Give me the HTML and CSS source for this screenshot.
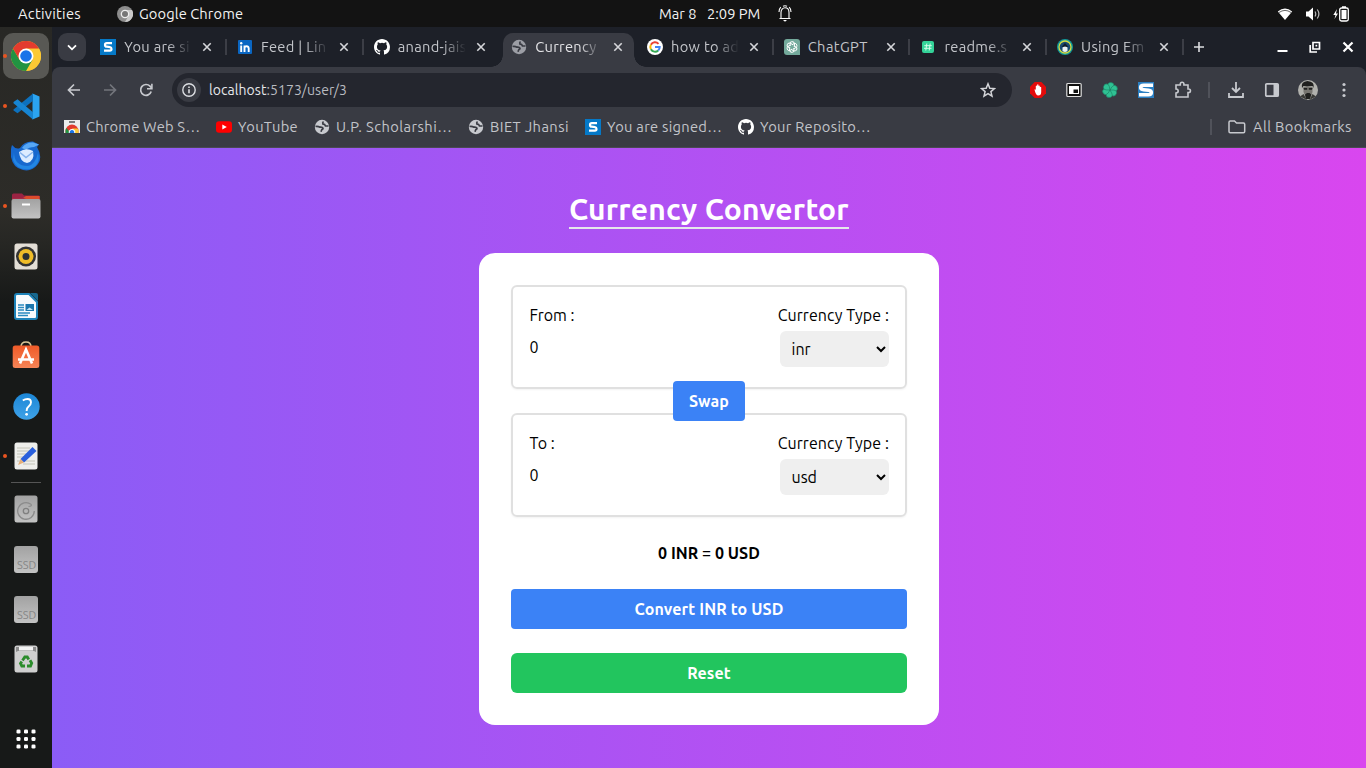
FILE: index.html
```html
<!DOCTYPE html>
<html lang="en">
<head>
<meta charset="utf-8">
<title>Currency Convertor</title>
<link rel="stylesheet" href="styles.css">
</head>
<body>
<svg class="defs" width="0" height="0">
  <defs>
    <linearGradient id="steel" x1="0" y1="0" x2="0" y2="1"><stop offset="0" stop-color="#a2a2a2"/><stop offset="1" stop-color="#c3c3c3"/></linearGradient>
    <linearGradient id="orange" x1="0" y1="0" x2="0" y2="1"><stop offset="0" stop-color="#ef5a28"/><stop offset="1" stop-color="#f68456"/></linearGradient>
    <linearGradient id="blue" x1="0" y1="0" x2="0" y2="1"><stop offset="0" stop-color="#1c86d6"/><stop offset="1" stop-color="#3fa2e8"/></linearGradient>
    <symbol id="chrome" viewBox="0 0 48 48">
      <circle cx="24" cy="24" r="24" fill="#fbc116"/>
      <path d="M24 12H44.8A24 24 0 0 1 24 48L34.4 30Z" fill="#fcc934"/>
      <path d="M13.6 30 3.2 12A24 24 0 0 0 24 48L34.4 30Z" fill="#229342"/>
      <path d="M3.2 12 13.6 30 24 12H44.8A24 24 0 0 0 3.2 12Z" fill="#e33b2e"/>
      <circle cx="24" cy="24" r="12" fill="#fff"/><circle cx="24" cy="24" r="9.300" fill="#1a73e8"/>
    </symbol>
    <symbol id="github" viewBox="0 0 16 16"><path fill="#fff" d="M8 0C3.58 0 0 3.58 0 8c0 3.54 2.29 6.53 5.47 7.59.4.07.55-.17.55-.38 0-.19-.01-.82-.01-1.49-2.01.37-2.53-.49-2.69-.94-.09-.23-.48-.94-.82-1.13-.28-.15-.68-.52-.01-.53.63-.01 1.08.58 1.23.82.72 1.21 1.87.87 2.33.66.07-.52.28-.87.51-1.07-1.78-.2-3.64-.89-3.64-3.95 0-.87.31-1.59.82-2.15-.08-.2-.36-1.02.08-2.12 0 0 .67-.21 2.2.82a7.6 7.6 0 0 1 4 0c1.53-1.04 2.2-.82 2.2-.82.44 1.1.16 1.92.08 2.12.51.56.82 1.27.82 2.15 0 3.07-1.87 3.75-3.65 3.95.29.25.54.73.54 1.48 0 1.07-.01 1.93-.01 2.2 0 .21.15.46.55.38A8 8 0 0 0 16 8c0-4.42-3.58-8-8-8z"/></symbol>
    <symbol id="globe" viewBox="0.8 0.8 22.4 22.4"><path fill="currentColor" d="M12 2C6.480 2 2 6.480 2 12s4.480 10 10 10 10-4.480 10-10S17.520 2 12 2zm-1 17.930c-3.950-.49-7-3.850-7-7.930 0-.62.08-1.210.21-1.790L9 15v1c0 1.100.9 2 2 2v1.930zm6.900-2.540c-.26-.81-1-1.390-1.900-1.390h-1v-3c0-.55-.45-1-1-1H8v-2h2c.55 0 1-.45 1-1V7h2c1.100 0 2-.9 2-2v-.41c2.930 1.190 5 4.060 5 7.410 0 2.080-.8 3.970-2.100 5.390z"/></symbol>
    <symbol id="globe-solid" viewBox="0 0 16 16"><circle cx="8" cy="8" r="7.200" fill="currentColor"/><path d="M14.500 7H11.500Q10.800 5 9 5.200 8.200 3.800 9.500 2.500M1.500 7.500Q4 7 6 8.200 9 7.800 9 9.800 7.500 10.500 7 12.800" fill="none" stroke="#393b43" stroke-width="1.700"/></symbol>
    <symbol id="sfav" viewBox="0 0 16 16"><path fill="#0579c8" d="M0 0h16v16H0z"/><path fill="none" stroke="#fff" stroke-width="2.200" d="M12 4.200H6.800Q5 4.200 5 5.900 5 7.600 6.800 7.700L10 8.200Q11.500 8.400 11.500 10 11.500 11.700 9.800 11.700H4"/></symbol>
    <symbol id="x" viewBox="0 0 10 10"><path d="m1.300 1.300 7.400 7.400m0-7.400L1.300 8.700" stroke="currentColor" stroke-width="1.600"/></symbol>
    <symbol id="petals" viewBox="0 0 24 24">
      <g fill="none" stroke="currentColor" stroke-width="1.800"><path id="ptl" d="M12 8 16 5.500Q20 4.500 21 8.500 21.500 11 19.500 13L14.500 15.500"/><use href="#ptl" transform="rotate(60 12 12)"/><use href="#ptl" transform="rotate(120 12 12)"/><use href="#ptl" transform="rotate(180 12 12)"/><use href="#ptl" transform="rotate(240 12 12)"/><use href="#ptl" transform="rotate(300 12 12)"/></g>
    </symbol>
    <symbol id="swirl" viewBox="0 0 24 24">
      <g fill="#2fc193" stroke="#1b7a61" stroke-width=".8"><path id="swl" d="M12 12 9.500 7.500Q7 2 12 .8 17.500 0 18 5 17.500 8 12 12z"/><use href="#swl" transform="rotate(60 12 12)"/><use href="#swl" transform="rotate(120 12 12)"/><use href="#swl" transform="rotate(180 12 12)"/><use href="#swl" transform="rotate(240 12 12)"/><use href="#swl" transform="rotate(300 12 12)"/></g>
    </symbol>
  </defs>
</svg>

<header class="topbar">
  <div class="topbar-left">
    <span class="activities">Activities</span>
    <svg class="app-icon" width="16" height="16" viewBox="0 0 48 48"><circle cx="24" cy="24" r="24" fill="#8d8d8d"/><path d="M24 12H45A24 24 0 0 1 24 48L34 30z" fill="#c9c9c9"/><circle cx="24" cy="24" r="13" fill="#eee"/><circle cx="24" cy="24" r="9" fill="#777"/></svg>
    <span class="appname">Google Chrome</span>
  </div>
  <div class="clock"><span class="date">Mar 8</span><span class="time">2:09 PM</span>
    <svg width="14" height="17" viewBox="0 0 14 17" fill="none" stroke="#fff" stroke-width="1.100"><path d="M1.500 13.500h11M3 13V7.500C3 4.800 4.600 2.800 7 2.800S11 4.800 11 7.500V13M5 1.200Q7 .2 9 1.200M2.800 2.200Q1 4 1 7M11.200 2.200Q13 4 13 7"/><path d="M5 15h4l-2 1.700z" fill="#fff" stroke="none"/></svg>
  </div>
  <div class="status">
    <svg width="16" height="14" viewBox="0 0 16 14"><path d="M8 13 .8 4.500Q8-1.500 15.200 4.500z" fill="#fff"/><path d="M2 5.500Q8 1.300 14 5.500" stroke="#555" fill="none" stroke-width=".9"/></svg>
    <svg width="16" height="14" viewBox="0 0 16 14"><path d="M1 4.500h2.500L8 .5v13L3.500 9.500H1z" fill="#fff"/><path d="M10 4.500Q11.500 7 10 9.500M12.300 2.500Q15.500 7 12.300 11.500" stroke="#bbb" stroke-width="1.200" fill="none"/></svg>
    <svg width="16" height="16" viewBox="0 0 16 16"><path d="M4 3 .3 9H2.500L1.500 13 5 7.500H3z" fill="#fff"/><rect x="6.700" y="2" width="8.600" height="13" rx="1.800" fill="none" stroke="#fff" stroke-width="1.300"/><path d="M8.500 4h5v9h-5zM9 .2h4V2H9z" fill="#fff"/></svg>
  </div>
</header>

<div class="desktop">
  <nav class="dock">
    <div class="dock-item running focused"><svg width="30" height="30"><use href="#chrome"/></svg></div>
    <div class="dock-item running"><svg width="27" height="27" viewBox="0 0 27 27"><path d="M19.500.5 26.500 3.500V23.500L19.500 26.500z" fill="#2ba4f0"/><path d="M20 .5v7.300L4.500 20.300.5 17.500V16.500z" fill="#0d71bd"/><path d="M20 26.500V19.200L4.500 6.200.5 9v1.200z" fill="#1785d2"/></svg></div>
    <div class="dock-item"><svg width="30" height="30" viewBox="0 0 30 30"><path d="M1 4Q5 9 9 7 13 0 22 .5L28 3.500 26 6Q32 16 27 23 21 31 12 29 2 27 0 16-1 10 1 4z" fill="#1768ce"/><path d="M11 7Q15 1 22 1.500L28 3.500 23 6Q18 6 15 9z" fill="#57a7f5"/><path d="M3 11Q3 25 17 25 24 24 27 12 30 24 19 28 6 30 2 19z" fill="#2286e4"/><path d="M8 11Q15 6 22 10 24 20 16 22 9 21 8 11z" fill="#dcecff"/><path d="m9 11.500 6 5 7-5.500" stroke="#85b3ed" fill="none" stroke-width="1.500"/></svg></div>
    <div class="dock-item running"><svg width="30" height="26" viewBox="0 0 30 26"><path d="M1 2Q1 .5 2.500.5H11l2 2H27.500Q29 2.500 29 4v8H1z" fill="#9b2343"/><path d="M12 5 15 3H28.500v5H1V5z" fill="#dc4b2b"/><path d="M1 5h14l-5 2H1z" fill="#a52a44"/><rect x=".5" y="6" width="29" height="19.500" rx="2" fill="url(#steel)"/><path d="M11 11.500h8" stroke="#fff" stroke-width="2"/></svg></div>
    <div class="dock-item"><svg width="24" height="27" viewBox="0 0 24 27"><rect x=".5" y=".5" width="23" height="26" rx="2.500" fill="#e3ded6"/><circle cx="12" cy="13.500" r="10" fill="#333"/><circle cx="12" cy="13.500" r="7.500" fill="#efbc28"/><circle cx="12" cy="13.500" r="3.500" fill="#2c3134"/></svg></div>
    <div class="dock-item"><svg width="24" height="27" viewBox="0 0 24 27"><path d="M3 1h12l8 8v15q0 2-2 2H3q-2 0-2-2V3q0-2 2-2z" fill="#f7fafc" stroke="#1d82b8" stroke-width="2"/><path d="M16 0h6q2 0 2 2v6z" fill="#17688f"/><path d="M4 12h6M4 14.500h6M4 17h6M4 20h12M4 22.500h10" stroke="#2b8bc0" stroke-width="1.300"/><path d="M11.500 11h8.500v7h-8.500z" fill="#1a76ad"/><path d="m12.500 17 3-2.500 3.500 2.500z" fill="#c3e3f3"/></svg></div>
    <div class="dock-item raised"><svg width="28" height="28" viewBox="0 0 28 28"><path d="M9 6Q9 1 14 1t5 5" fill="none" stroke="#d9c798" stroke-width="1.500"/><rect x=".7" y="4.500" width="26.600" height="22.500" rx="2.500" fill="url(#orange)"/><path d="m8 22.500 6-14 6 14M6 18.500h16" fill="none" stroke="#fff" stroke-width="2.600"/></svg></div>
    <div class="dock-item"><svg width="27" height="27" viewBox="0 0 27 27"><circle cx="13.500" cy="13.500" r="13.200" fill="url(#blue)"/><path d="M9.800 7.500Q12 6 14.500 6q3.500 0 3.500 3.300 0 2.200-2.200 4Q13.600 15 13.600 18" fill="none" stroke="#fff" stroke-width="1.900"/><circle cx="13.600" cy="21.300" r="1.400" fill="#fff"/></svg></div>
    <div class="dock-item running"><svg width="24" height="28" viewBox="0 0 24 28"><rect x=".5" y=".5" width="23" height="27" rx="2.500" fill="#eeeeeb"/><path d="M3 6h13M3 9h12M3 12h9M3 15h8M3 19h18M9 22h12" stroke="#c4c4b8" stroke-width="1"/><path d="M18.500 5 22.500 9 10 20.500 6.500 17z" fill="#295fdc"/><path d="M6.500 17 10 20.500 4 23z" fill="#e5b07b"/></svg></div>
    <div class="dock-sep"></div>
    <div class="dock-item"><svg width="24" height="28" viewBox="0 0 24 28"><rect x=".5" y=".5" width="23" height="27" rx="2.500" fill="url(#steel)"/><path d="M17 9.300A8.300 8.300 0 1 0 20.300 16" fill="none" stroke="#8b8b8b" stroke-width="1.300"/><circle cx="12" cy="16" r="2.700" fill="none" stroke="#808080" stroke-width="1.300"/><path d="M17 9.300Q18.500 11 14.500 11.500" fill="none" stroke="#8b8b8b" stroke-width="1.200"/></svg></div>
    <div class="dock-item"><div class="ssd">SSD</div></div>
    <div class="dock-item"><div class="ssd">SSD</div></div>
    <div class="dock-item"><svg width="24" height="28" viewBox="0 0 24 28"><rect x=".5" y=".5" width="23" height="27" rx="2.500" fill="#cfcfcf"/><path d="M2 2h20v5l-2-1H4L2 7z" fill="#8b8b8b"/><path d="M5 2h14v3.500H5z" fill="#f3f3f3"/><g fill="none" stroke="#2b8c2b" stroke-width="2.800"><path d="m8.500 15.500 2.300-3.500h2.500l1.500 2.500"/><path d="m16 15.200 1.700 3-1.200 2.800H13"/><path d="M11 21H7.800l-1.300-2.600 1.300-1.900"/></g></svg></div>
    <div class="dock-item apps"><svg width="20" height="20" viewBox="0 0 20 20" fill="#fff"><rect x=".5" y=".5" width="4" height="4" rx="1.300"/><rect x="8" y=".5" width="4" height="4" rx="1.300"/><rect x="15.500" y=".5" width="4" height="4" rx="1.300"/><rect x=".5" y="8" width="4" height="4" rx="1.300"/><rect x="8" y="8" width="4" height="4" rx="1.300"/><rect x="15.500" y="8" width="4" height="4" rx="1.300"/><rect x=".5" y="15.500" width="4" height="4" rx="1.300"/><rect x="8" y="15.500" width="4" height="4" rx="1.300"/><rect x="15.500" y="15.500" width="4" height="4" rx="1.300"/></svg></div>
  </nav>

  <main class="window">
    <div class="tabstrip">
      <div class="tab-search"><svg width="10" height="7" viewBox="0 0 10 7"><path d="m1 1.300 4 4 4-4" fill="none" stroke="#fff" stroke-width="1.800"/></svg></div>
      <div class="tab"><svg class="fav"><use href="#sfav"/></svg><span class="tab-title">You are si</span><svg class="close"><use href="#x"/></svg></div>
      <div class="tab"><svg class="fav" viewBox="0 0 16 16"><rect x="1" y="1" width="14" height="14" rx="1" fill="#0a66c2"/><path d="M4.200 6.500V13M7.500 13V6.500M7.500 9q0-1.700 2-1.700T11.700 9.500V13" fill="none" stroke="#fff" stroke-width="1.900"/><circle cx="4.200" cy="4.200" r="1.200" fill="#fff"/></svg><span class="tab-title">Feed | Lin</span><svg class="close"><use href="#x"/></svg></div>
      <div class="tab nosep"><svg class="fav"><use href="#github"/></svg><span class="tab-title">anand-jais</span><svg class="close"><use href="#x"/></svg></div>
      <div class="tab active"><svg class="fav dim"><use href="#globe-solid"/></svg><span class="tab-title">Currency</span><svg class="close"><use href="#x"/></svg></div>
      <div class="tab"><svg class="fav" viewBox="0 0 16 16"><circle cx="8" cy="8" r="8" fill="#fff"/><g fill="none" stroke-width="2"><path d="M11.500 4.800A4.700 4.700 0 0 0 3.900 5.700" stroke="#ea4335"/><path d="M3.900 5.700A4.700 4.700 0 0 0 3.900 10.300" stroke="#fbbc05"/><path d="M3.900 10.300A4.700 4.700 0 0 0 11.200 11.400" stroke="#34a853"/><path d="M11.200 11.400Q12.700 10 12.700 8H8" stroke="#4285f4"/></g></svg><span class="tab-title">how to ad</span><svg class="close"><use href="#x"/></svg></div>
      <div class="tab"><svg class="fav" viewBox="0 0 16 16"><path d="M3 0h10q3 0 3 3v13H3q-3 0-3-3V3q0-3 3-3z" fill="#74aa9c"/><svg x="1.500" y="1.500" width="13" height="13" color="#fff"><use href="#petals"/></svg></svg><span class="tab-title full">ChatGPT</span><svg class="close"><use href="#x"/></svg></div>
      <div class="tab"><svg class="fav" viewBox="0 0 16 16"><rect x="2" y="2" width="12" height="12" rx="2" fill="#34d399"/><path d="m6.800 4.500-1 7M10.200 4.500l-1 7M4.300 6.700h7.500M4 9.300h7.500" stroke="#d4fbe9" fill="none"/></svg><span class="tab-title">readme.s</span><svg class="close"><use href="#x"/></svg></div>
      <div class="tab"><svg class="fav" viewBox="0 0 16 16"><circle cx="8" cy="8" r="8" fill="#129a9a"/><circle cx="8" cy="8" r="6" fill="#174a70" stroke="#d5d944" stroke-width="1.300"/><path d="M5.500 12V8.500L8 7l2.500 1.500V12Q8 14 5.500 12z" fill="#e8f1f4"/><path d="M4.500 8 8 4l3.500 4L8 7.500z" fill="#101d2b"/></svg><span class="tab-title">Using Em</span><svg class="close"><use href="#x"/></svg></div>
      <svg class="newtab" width="12" height="12" viewBox="0 0 12 12"><path d="M6 1v10M1 6h10" stroke="#dcdde0" stroke-width="1.600"/></svg>
      <div class="winbtns">
        <svg width="11" height="12" viewBox="0 0 11 12"><path d="M.5 10h10" stroke="#fff" stroke-width="2"/></svg>
        <svg width="12" height="12" viewBox="0 0 12 12" fill="none" stroke="#fff" stroke-width="1.700"><path d="M4 1.500h6.500V8H4zM1.200 4v7H8"/><path d="M6.500 3.800h1.700v1.700H6.500z" fill="#fff" stroke="none"/></svg>
        <svg width="12" height="12" viewBox="0 0 12 12"><path d="m1.500 1.500 9 9m0-9-9 9" stroke="#fff" stroke-width="2.200"/></svg>
      </div>
    </div>

    <div class="toolbar">
      <div class="navrow">
        <div class="navbtns">
          <svg width="14" height="14" viewBox="0 0 14 14"><path d="M13 7H2M7 1.500 1.500 7 7 12.500" fill="none" stroke="#c7c9ce" stroke-width="1.700"/></svg>
          <svg width="14" height="14" viewBox="0 0 14 14"><path d="M1 7h11M7 1.500 12.500 7 7 12.500" fill="none" stroke="#73757c" stroke-width="1.700"/></svg>
          <svg width="14" height="14" viewBox="0 0 14 14"><path d="M12.200 8.500A5.400 5.400 0 1 1 11 3.200L12.500 4.800" fill="none" stroke="#c7c9ce" stroke-width="1.700"/><path d="M12.900.8v5H8" fill="none" stroke="#c7c9ce" stroke-width="1.600"/></svg>
        </div>
        <div class="omnibox">
          <div class="info"><svg width="14" height="14" viewBox="0 0 14 14"><circle cx="7" cy="7" r="6.200" fill="none" stroke="#dcdee2" stroke-width="1.400"/><path d="M7 6.300v4M7 3.500V5" stroke="#dcdee2" stroke-width="1.600"/></svg></div>
          <span class="url"><b>localhost</b>:5173/user/3</span>
          <svg class="star" width="16" height="16" viewBox="0 0 16 16"><path d="m8 1.800 1.800 4.400 4.700.4-3.600 3 1.100 4.600L8 11.700l-4 2.500 1.100-4.600-3.600-3 4.700-.4z" fill="none" stroke="#d3d4d8" stroke-width="1.500"/></svg>
        </div>
        <div class="extensions">
          <svg viewBox="0 0 16 16"><path d="M4.700 0h6.600L16 4.700v6.600L11.300 16H4.700L0 11.300V4.700z" fill="#e30b0b"/><path d="M4.500 7.500q.8-.7 1.300.5V4q.8-1 1.300 0V2.800q.8-1 1.400 0V4q.7-1 1.300 0v1.300q.8-.9 1.400 0V10q0 3.500-3 3.500-2.500 0-3.700-6z" fill="#fff"/></svg>
          <svg viewBox="0 0 16 16"><rect x=".8" y="1.500" width="14.400" height="13" rx="1" fill="#111" stroke="#ddd" stroke-width="1.200"/><path d="M3 4h10v8H3z" fill="#fff"/><path d="M7.500 7.500H12V11H7.500z" fill="#111"/></svg>
          <svg viewBox="0 0 24 24"><use href="#swirl"/></svg>
          <svg viewBox="0 0 16 16"><path d="M0 0h16v16H0z" fill="#2b7fc2"/><path d="M15 3.200H5.800Q2.700 3.200 2.700 5.500 2.700 7.400 5.700 7.700L10.500 8.300Q13.300 8.600 13.300 10.500 13.300 12.800 10.300 12.800H1" fill="none" stroke="#fff" stroke-width="3.600"/></svg>
          <svg class="wide" viewBox="0 0 18 18"><path d="M2 4h4.300V3a1.800 1.800 0 0 1 3.600 0v1H14v4h.7a1.700 1.700 0 0 1 0 3.500H14V16H2v-4q2.200-.1 2.200-2T2 8z" fill="none" stroke="#c7c9ce" stroke-width="1.600"/></svg>
        </div>
        <i class="vline"></i>
        <div class="extensions actions">
          <svg viewBox="0 0 16 16" fill="none" stroke="#c7c9ce" stroke-width="1.800"><path d="M8 0v10M4 6l4 4 4-4M1 11v4h14v-4"/></svg>
          <svg viewBox="0 0 16 16"><rect x="1.800" y="1.800" width="12.400" height="12.400" rx="1" fill="none" stroke="#c7c9ce" stroke-width="1.700"/><path d="M9.500 2H14v12H9.500z" fill="#c7c9ce"/></svg>
          <svg class="avatar" viewBox="0 0 20 20"><circle cx="10" cy="10" r="10" fill="#b1b1ad"/><path d="M4 8Q2.500 1.500 9.500 1 17 1.500 15.500 8L14.500 6 9 6.500 5.500 6z" fill="#20201f"/><path d="M5.500 7h9v5l-2 6H8l-2.500-6z" fill="#777570"/><path d="M5.500 8h3.700v1.700H6zM10.800 8h3.700L14 9.700h-3.200zM7 14.500l2-1.500h2.500l1.800 1.500-1.500 4.500H8z" fill="#20201f"/><path d="M2 16.500 5.500 14 9 20zM18 16.500 14.500 14 11.500 20z" fill="#3a3a37"/></svg>
          <svg class="menu" viewBox="0 0 4 16" fill="#c7c9ce"><circle cx="2" cy="2.500" r="1.600"/><circle cx="2" cy="8" r="1.600"/><circle cx="2" cy="13.500" r="1.600"/></svg>
        </div>
      </div>
      <div class="bookmarks">
        <svg class="fav" viewBox="0 0 16 16"><path d="M0 1h16v13H0z" fill="#ececec"/><path d="M5 3h6" stroke="#555" stroke-width="1.500"/><path d="M1.500 14V12a6.500 6.500 0 0 1 13 0v2z" fill="#e33b2e"/><path d="M1.500 14V11l1-2 4 5z" fill="#229342"/><path d="M14.500 14V11L13.500 9.500H8l3 4.500z" fill="#fcc934"/><path d="M4.800 14a3.300 3.300 0 1 1 6.400 0z" fill="#fff"/><path d="M5.800 14a2.300 2.300 0 1 1 4.400 0z" fill="#1a73e8"/></svg>
        <span class="bm b1">Chrome Web S…</span>
        <svg class="fav" viewBox="0 0 16 16"><rect y="2.200" width="16" height="11.600" rx="3" fill="#f00"/><path d="m6.300 5.500 4.500 2.500-4.500 2.500z" fill="#fff"/></svg>
        <span class="bm b2">YouTube</span>
        <svg class="fav"><use href="#globe-solid"/></svg>
        <span class="bm b3">U.P. Scholarshi…</span>
        <svg class="fav"><use href="#globe-solid"/></svg>
        <span class="bm b4">BIET Jhansi</span>
        <svg class="fav"><use href="#sfav"/></svg>
        <span class="bm b5">You are signed…</span>
        <svg class="fav"><use href="#github"/></svg>
        <span class="bm b6">Your Reposito…</span>
        <i class="vline push"></i>
        <svg class="folder" width="18" height="14" viewBox="0 0 18 14"><path d="M1 2.200Q1 1 2.200 1H6.500l2 2H15.500Q16.700 3 16.700 4.200V11.500q0 1.200-1.200 1.200H2.200Q1 12.700 1 11.500z" fill="none" stroke="#c7c9ce" stroke-width="1.500"/></svg>
        <span class="bm b7">All Bookmarks</span>
      </div>
    </div>

    <section class="page">
      <h1 class="title">Currency Convertor</h1>
      <div class="card">
        <div class="box">
          <div class="amount"><label>From :</label><span class="value">0</span></div>
          <div class="type"><label>Currency Type :</label><select><option>inr</option><option>usd</option></select></div>
          <button class="swap">Swap</button>
        </div>
        <div class="box">
          <div class="amount"><label>To :</label><span class="value">0</span></div>
          <div class="type"><label>Currency Type :</label><select><option>usd</option><option>inr</option></select></div>
        </div>
        <p class="result"><b>0 INR</b> = <b>0 USD</b></p>
        <button class="convert">Convert INR to USD</button>
        <button class="reset">Reset</button>
      </div>
    </section>
  </main>
</div>
</body>
</html>
```
FILE: styles.css
```css
* { box-sizing: border-box; }
body { margin: 0; width: 1366px; height: 768px; overflow: hidden; font-family: Ubuntu, "Noto Sans", "Open Sans", sans-serif; display: flex; flex-direction: column; background: #131313; }
svg { flex: none; display: block; }
.defs { position: absolute; }

/* system bar */
.topbar { height: 27px; flex: none; display: grid; grid-template-columns: 1fr auto 1fr; align-items: center; background: #131313; color: #f2f2f2; font-size: 14.670px; line-height: 27px; white-space: nowrap; }
.topbar-left { display: flex; align-items: center; padding-left: 18px; }
.activities { width: 99px; letter-spacing: .28px; }
.appname { letter-spacing: .1px; }
.app-icon { margin-right: 6px; }
.clock { display: flex; align-items: center; margin-left: 85px; }
.date { width: 48px; }
.time { width: 71px; }
.status { display: flex; justify-content: flex-end; align-items: center; gap: 12px; padding-right: 17px; }

/* dock */
.desktop { flex: 1; display: flex; min-height: 0; }
.dock { width: 52px; flex: none; padding: 4px 0; display: flex; flex-direction: column; background: linear-gradient(#282825, #2d2c28 25%, #272724 29%, #171918 37%, #171918); }
.dock-item { position: relative; height: 50px; flex: none; display: flex; align-items: center; justify-content: center; }
.focused::after { content: ""; position: absolute; inset: 2px 3px; border-radius: 10px; background: #585854; z-index: 0; }
.focused svg { position: relative; z-index: 1; }
.raised { padding-bottom: 3px; }
.running::before { content: ""; position: absolute; left: 3px; top: 23px; width: 4px; height: 4px; border-radius: 50%; background: #e95420; z-index: 2; }
.dock-sep { height: 1px; margin: 1px 11px; background: #555; flex: none; }
.ssd { width: 24px; height: 27px; border-radius: 3px; background: linear-gradient(#a2a2a2, #c3c3c3); color: #858585; font-size: 11px; line-height: 39px; padding-left: 3px; white-space: nowrap; }
.apps { margin-top: auto; }

/* tabs */
.window { flex: 1; display: flex; flex-direction: column; min-width: 0; background: #1d2028; }
.tabstrip { height: 40px; flex: none; display: flex; padding: 6px 12px 0 6px; }
.tab-search { width: 28px; height: 28px; border-radius: 9px; background: #393b43; display: flex; align-items: center; justify-content: center; margin-right: 4.300px; }
.tab { position: relative; width: 136.700px; height: 34px; padding: 0 0 6px 10px; display: flex; align-items: center; color: #c3c5ca; }
.tab::after { content: ""; position: absolute; right: 0; top: 6px; width: 2px; height: 16px; background: #3c3e46; }
.nosep::after { display: none; }
.fav { width: 16px; height: 16px; flex: none; color: #c7c9ce; }
.dim { color: #9c9ea5; }
.tab-title { margin-left: 8px; width: 68px; flex: none; white-space: nowrap; font-size: 14.670px; letter-spacing: .3px; line-height: 28px; -webkit-mask-image: linear-gradient(90deg, #000 44px, transparent 68px); mask-image: linear-gradient(90deg, #000 44px, transparent 68px); }
.full { -webkit-mask-image: none; mask-image: none; letter-spacing: .4px; }
.close { width: 10px; height: 10px; margin-left: 10px; color: #d5d6da; }
.active { color: #e3e3e6; z-index: 1; padding-left: 11px; }
.active::before { content: ""; position: absolute; z-index: -1; left: 2.600px; top: 0; width: 131px; height: 34px; border-radius: 10px 10px 0 0; background: #393b43; }
.active::after { width: 155px; height: 12px; top: 22px; left: -9.400px; right: auto; z-index: -2; background: radial-gradient(circle at 0 0, transparent 11.500px, #393b43 12px) 0 0 / 12px 12px no-repeat, radial-gradient(circle at 12px 0, transparent 11.500px, #393b43 12px) 143px 0 / 12px 12px no-repeat; }
.newtab { margin: 8px 0 0 9px; }
.winbtns { margin: 8px 0 0 auto; display: flex; gap: 21px; }

/* toolbar and bookmarks */
.toolbar { flex: none; height: 81px; background: #393b43; border-radius: 8px 8px 0 0; border-bottom: 1px solid #4a4953; padding-top: 6px; }
.navrow { height: 34px; display: flex; align-items: center; padding-left: 15px; }
.navbtns { display: flex; gap: 22px; width: 105px; }
.omnibox { width: 840px; height: 34px; border-radius: 17px; background: #24262e; display: flex; align-items: center; padding: 0 16px 0 5px; color: #b9bbc0; font-size: 14px; }
.url { letter-spacing: .06px; }
.url b { font-weight: 400; color: #e6e7ea; }
.info { width: 24px; height: 24px; border-radius: 50%; background: #393b43; display: flex; align-items: center; justify-content: center; margin-right: 8px; }
.star { margin-left: auto; }
.extensions { display: flex; align-items: center; gap: 20px; margin-left: 18px; }
.extensions svg { width: 16px; height: 16px; }
.extensions .wide { width: 18px; height: 18px; }
.vline { width: 2px; height: 16px; background: #50525a; margin-left: 16px; }
.actions .avatar { width: 20px; height: 20px; margin: 0 -2px; }
.actions .menu { width: 4px; margin-left: 6px; }
.bookmarks { height: 40px; display: flex; align-items: center; padding: 0 14px 0 12px; color: #c2c4c9; font-size: 14.670px; white-space: nowrap; }
.bm { margin-left: 6px; padding-bottom: 2px; flex: none; letter-spacing: .3px; }
.b1 { width: 130px; letter-spacing: .22px; }
.b2 { width: 76px; letter-spacing: .36px; }
.b3 { width: 132px; letter-spacing: .44px; }
.b4 { width: 95px; letter-spacing: .43px; }
.b5 { width: 131px; }
.b6 { width: 111px; }
.b7 { width: 99px; letter-spacing: .38px; }
.push { margin-left: auto; }
.folder { margin: 0 1px 0 16px; }

/* page */
.page { flex: 1; min-height: 0; display: flex; flex-direction: column; align-items: center; background: linear-gradient(90deg, #8b5cf6, #d946ef); font-size: 16px; line-height: 24px; color: #000; }
.title { margin: 44px 0 24px; height: 37px; width: 280px; border-bottom: 2px solid #e5e7eb; color: #fff; font-size: 30px; line-height: 34px; font-weight: 700; letter-spacing: .22px; white-space: nowrap; }
.card { width: 460px; height: 472px; padding: 32px; border-radius: 16px; background: #fff; display: flex; flex-direction: column; gap: 24px; }
.box { position: relative; height: 104px; flex: none; border: 2px solid #e0e0e0; border-radius: 6px; padding: 16px 16px 16px 16.500px; display: flex; justify-content: space-between; box-shadow: 0 1px 2px rgba(0,0,0,.05); }
.amount { display: flex; flex-direction: column; gap: 8px; }
.type { display: flex; flex-direction: column; align-items: flex-end; gap: 4px; letter-spacing: .09px; }
select { width: 109px; height: 36px; border: 0; border-radius: 6px; background: #efefef; padding: 0 0 0 7.500px; font: inherit; color: #000; }
button { border: 0; border-radius: 4px; height: 40px; flex: none; padding: 0; font: inherit; font-weight: 700; letter-spacing: .12px; color: #fff; background: #3b82f6; }
.swap { position: absolute; z-index: 1; left: 160px; top: 94px; width: 72px; }
.result { margin: 0; text-align: center; letter-spacing: .06px; }
.reset { background: #22c55e; border-radius: 6px; }
```
